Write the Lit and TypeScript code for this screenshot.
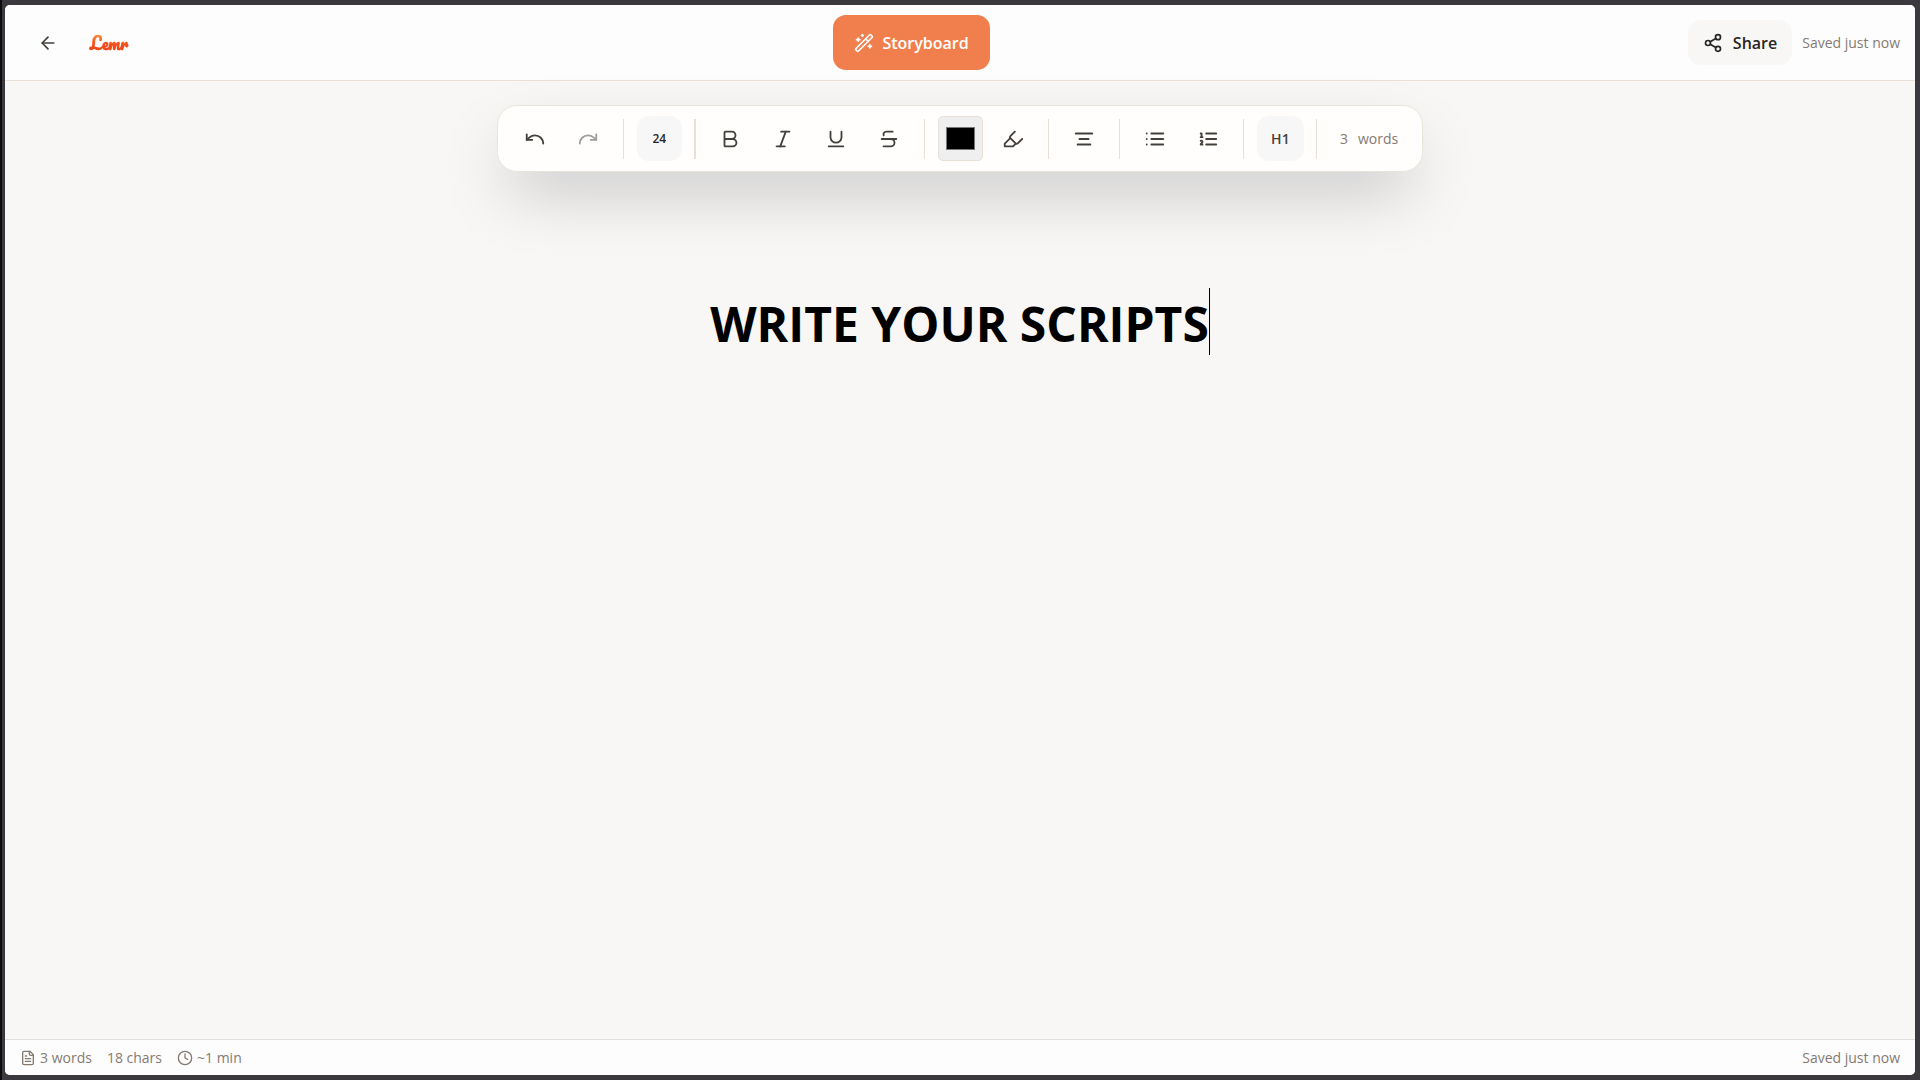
import { LitElement, html, svg, css } from "lit";
import { customElement, state } from "lit/decorators.js";

const icon = (body: unknown, cls = "") => html`
  <svg class="icon ${cls}" viewBox="0 0 24 24" aria-hidden="true">${body}</svg>
`;

const icons = {
  back: svg`<path d="m12 19-7-7 7-7"/><path d="M19 12H5"/>`,
  wand: svg`<path d="m21.64 3.64-1.28-1.28a1.21 1.21 0 0 0-1.72 0L2.36 18.64a1.21 1.21 0 0 0 0 1.72l1.28 1.28a1.2 1.2 0 0 0 1.72 0L21.64 5.36a1.2 1.2 0 0 0 0-1.72"/><path d="m14 7 3 3"/><path d="M5 6v4"/><path d="M19 14v4"/><path d="M10 2v2"/><path d="M7 8H3"/><path d="M21 16h-4"/><path d="M11 3H9"/>`,
  share: svg`<circle cx="18" cy="5" r="3"/><circle cx="6" cy="12" r="3"/><circle cx="18" cy="19" r="3"/><path d="m8.59 13.51 6.83 3.98"/><path d="m15.41 6.51-6.82 3.98"/>`,
  undo: svg`<path d="M3 7v6h6"/><path d="M21 17a9 9 0 0 0-9-9 9 9 0 0 0-6 2.3L3 13"/>`,
  redo: svg`<path d="M21 7v6h-6"/><path d="M3 17a9 9 0 0 1 9-9 9 9 0 0 1 6 2.3l3 2.7"/>`,
  bold: svg`<path d="M6 12h9a4 4 0 0 1 0 8H7a1 1 0 0 1-1-1V5a1 1 0 0 1 1-1h7a4 4 0 0 1 0 8"/>`,
  italic: svg`<path d="M19 4h-9"/><path d="M14 20H5"/><path d="M15 4 9 20"/>`,
  underline: svg`<path d="M6 4v6a6 6 0 0 0 12 0V4"/><path d="M4 20h16"/>`,
  strike: svg`<path d="M16 4H9a3 3 0 0 0-2.83 4"/><path d="M14 12a4 4 0 0 1 0 8H6"/><path d="M4 12h16"/>`,
  highlight: svg`<path d="m9 11-6 6v3h9l3-3"/><path d="m22 12-4.6 4.6a2 2 0 0 1-2.8 0l-5.2-5.2a2 2 0 0 1 0-2.8L14 4"/>`,
  align: svg`<path d="M21 6H3"/><path d="M17 12H7"/><path d="M19 18H5"/>`,
  bullets: svg`<path d="M3 6h.01M3 12h.01M3 18h.01M8 6h13M8 12h13M8 18h13"/>`,
  numbers: svg`<path d="M10 6h11M10 12h11M10 18h11"/><path d="M4 6h1v4"/><path d="M4 10h2"/><path d="M6 18H4c0-1 2-2 2-3s-1-1.5-2-1"/>`,
  file: svg`<path d="M15 2H6a2 2 0 0 0-2 2v16a2 2 0 0 0 2 2h12a2 2 0 0 0 2-2V7Z"/><path d="M14 2v4a2 2 0 0 0 2 2h4"/><path d="M10 9H8"/><path d="M16 13H8"/><path d="M16 17H8"/>`,
  clock: svg`<circle cx="12" cy="12" r="10"/><path d="M12 6v6l4 2"/>`,
};

@customElement("app-root")
export class AppRoot extends LitElement {
  @state() private text = "WRITE YOUR SCRIPTS";

  static styles = css`
    :host {
      display: flex;
      box-sizing: border-box;
      min-height: 100vh;
      padding: 5px 5px 5px 3px;
      border-left: 2px solid #0c0b0d;
      background: #3b393e;
      color: #44403c;
      font-family: "Segoe UI", "Open Sans", "Noto Sans", sans-serif;
      font-size: 14px;
    }
    *, *::before, *::after { box-sizing: border-box; }
    button, input { font: inherit; color: inherit; }
    button { border: 0; background: none; padding: 0; cursor: pointer; }
    .window {
      flex: 1;
      display: flex;
      flex-direction: column;
      overflow: hidden;
      border-radius: 5px;
      background: #f8f7f6;
    }
    .icon {
      display: block;
      flex: none;
      width: 22px;
      height: 22px;
      fill: none;
      stroke: currentColor;
      stroke-width: 2;
      stroke-linecap: round;
      stroke-linejoin: round;
    }
    .icon.medium { width: 20px; height: 20px; }
    .icon.small { width: 16px; height: 16px; }
    .header {
      display: grid;
      grid-template-columns: 1fr auto 1fr;
      align-items: center;
      height: 76px;
      padding: 0 15px 0 20px;
      border-bottom: 1px solid #e9e0d8;
      background: #fdfdfd;
    }
    .start, .end { display: flex; align-items: center; }
    .start { gap: 16px; }
    .end { justify-content: flex-end; gap: 10px; }
    .tool {
      display: grid;
      place-items: center;
      width: 45px;
      height: 45px;
      border-radius: 12px;
    }
    .tool:disabled { opacity: 0.5; cursor: default; }
    .logo {
      padding: 0 4px;
      background: linear-gradient(#fb923c 20%, #f4511e 50%, #ea3a0c);
      background-clip: text;
      -webkit-background-clip: text;
      color: transparent;
      font: 700 16px/28px Pacifico, Lobster, cursive;
      text-decoration: none;
    }
    .storyboard {
      display: flex;
      align-items: center;
      gap: 8px;
      height: 55px;
      margin-right: 102px;
      padding: 0 21px;
      border-radius: 13px;
      background: #f07f4d;
      color: #fff;
      font-size: 16px;
      font-weight: 600;
    }
    .share {
      display: flex;
      align-items: center;
      gap: 10px;
      height: 45px;
      padding: 0 15px;
      border-radius: 13px;
      background: #f8f7f6;
      color: #292524;
      font-size: 16px;
      font-weight: 600;
    }
    .muted { color: #857a72; }
    .main {
      flex: 1;
      display: flex;
      flex-direction: column;
      align-items: center;
      padding: 24px 20px;
    }
    .toolbar {
      display: flex;
      align-items: center;
      gap: 8px;
      height: 67px;
      padding: 0 24px 0 15px;
      border: 1px solid #e7e5da;
      border-radius: 20px;
      background: #fffefc;
      box-shadow: 0 28px 66px -13px rgb(0 0 0 / 25%);
    }
    .rule {
      width: 1px;
      height: 40px;
      margin: 0 5px 0 4px;
      background: #e7e0d9;
    }
    .rule.wide { width: 2px; margin: 0 4px; }
    .filled { background: #f8f7f7; font-weight: 600; }
    .size { font-size: 12px; text-align: center; border: 0; padding: 0; color: #292524; }
    .heading { width: 47px; }
    .color {
      width: 45px;
      height: 45px;
      padding: 6px 5px;
      border: 1px solid #e7e0d9;
      border-radius: 5px;
      background: #efefef;
    }
    .count { display: flex; gap: 10px; margin-left: 10px; }
    .editor {
      display: flex;
      justify-content: center;
      width: 100%;
      margin-top: 116px;
    }
    .title {
      margin: 0;
      padding-top: 2px;
      color: #000;
      font-size: 48px;
      line-height: 67px;
      font-weight: 700;
      text-align: center;
    }
    .caret { width: 1px; height: 67px; background: #000; }
    .footer {
      display: flex;
      justify-content: space-between;
      align-items: center;
      height: 36px;
      padding: 0 15px;
      border-top: 1px solid #e2dfdc;
      background: #fdfdfd;
    }
    .stats { display: flex; gap: 15px; }
    .stat { display: flex; align-items: center; gap: 4px; }
  `;

  private get words() {
    return this.text.trim().split(/\s+/).length;
  }

  private tool(label: string, body: unknown, disabled = false) {
    return html`<button class="tool" aria-label=${label} ?disabled=${disabled}>${icon(body)}</button>`;
  }

  private rule(cls = "") {
    return html`<span class="rule ${cls}"></span>`;
  }

  render() {
    return html`
      <div class="window">
        <header class="header">
          <div class="start">
            <button class="tool" aria-label="Back">${icon(icons.back, "medium")}</button>
            <a class="logo" href="#">Lemr</a>
          </div>
          <button class="storyboard">${icon(icons.wand, "medium")}Storyboard</button>
          <div class="end">
            <button class="share">${icon(icons.share, "medium")}Share</button>
            <span class="muted">Saved just now</span>
          </div>
        </header>
        <main class="main">
          <div class="toolbar" role="toolbar" aria-label="Formatting">
            ${this.tool("Undo", icons.undo)}
            ${this.tool("Redo", icons.redo, true)}
            ${this.rule()}
            <input class="tool filled size" aria-label="Font size" value="24" />
            ${this.rule("wide")}
            ${this.tool("Bold", icons.bold)}
            ${this.tool("Italic", icons.italic)}
            ${this.tool("Underline", icons.underline)}
            ${this.tool("Strikethrough", icons.strike)}
            ${this.rule()}
            <input class="color" type="color" aria-label="Text color" value="#000000" />
            ${this.tool("Highlight", icons.highlight)}
            ${this.rule()}
            ${this.tool("Align center", icons.align)}
            ${this.rule()}
            ${this.tool("Bullet list", icons.bullets)}
            ${this.tool("Numbered list", icons.numbers)}
            ${this.rule()}
            <button class="tool filled heading">H1</button>
            ${this.rule()}
            <span class="count muted"><span>${this.words}</span><span>words</span></span>
          </div>
          <div class="editor">
            <h1 class="title">${this.text}</h1><span class="caret"></span>
          </div>
        </main>
        <footer class="footer muted">
          <div class="stats">
            <span class="stat">${icon(icons.file, "small")}${this.words} words</span>
            <span class="stat">${this.text.length} chars</span>
            <span class="stat">${icon(icons.clock, "small")}~1 min</span>
          </div>
          <span>Saved just now</span>
        </footer>
      </div>
    `;
  }
}
